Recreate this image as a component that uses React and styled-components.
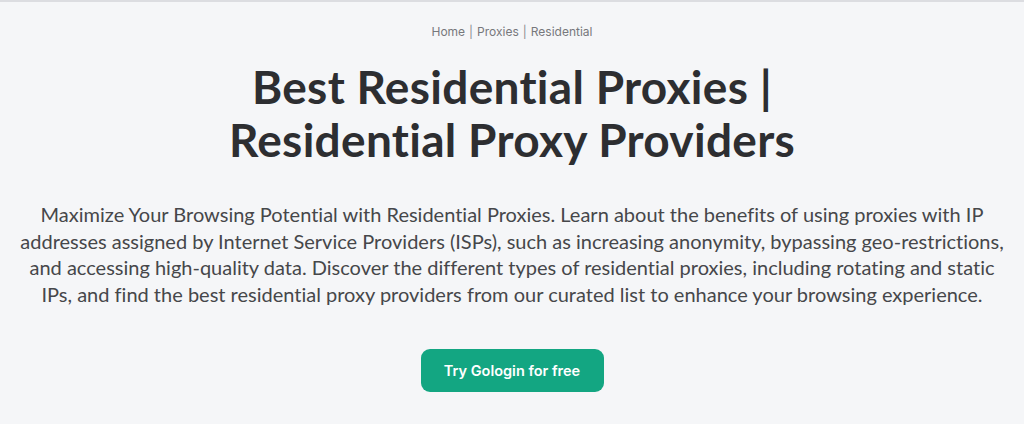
import React from "react";
import styled, { createGlobalStyle } from "styled-components";

const GlobalStyle = createGlobalStyle`
  * { box-sizing: border-box; }
  html, body {
    margin: 0;
    padding: 0;
    background: #f5f6f8;
  }
  body {
    font-family: "Lato", "Inter", sans-serif;
    font-variant-ligatures: none;
  }
`;

const Page = styled.div`
  height: 424px;
  border-top: 2px solid #dcdde1;
  display: flex;
  flex-direction: column;
  align-items: center;
  padding: 21px 12px 0;
`;

const Breadcrumbs = styled.nav`
  font-family: "Inter", sans-serif;
  font-size: 12px;
  color: #77787c;
  display: flex;
  gap: 4px;
  line-height: 18px;
`;

const Crumb = styled.a`
  color: inherit;
  text-decoration: none;
`;

const Sep = styled.span`
  color: #8a8b8f;
`;

const Title = styled.h1`
  margin: 19px 0 0;
  font-family: "Lato", sans-serif;
  font-weight: 700;
  font-size: 46px;
  line-height: 53px;
  color: #2d2e31;
  text-align: center;
  letter-spacing: 0.3px;
  max-width: 640px;
`;

const Lead = styled.p`
  margin: 35px 0 0;
  font-family: "Lato", sans-serif;
  font-size: 20px;
  line-height: 26.5px;
  color: #46474a;
  text-align: center;
  max-width: 1000px;
`;

const Button = styled.a`
  margin-top: 42px;
  width: 183px;
  height: 43px;
  border-radius: 9px;
  background: #13a682;
  color: #fff;
  font-family: "Inter", sans-serif;
  font-weight: 600;
  font-size: 14.5px;
  display: flex;
  align-items: center;
  justify-content: center;
  text-decoration: none;
`;

export default function App() {
  return (
    <>
      <GlobalStyle />
      <Page>
        <Breadcrumbs>
          <Crumb href="#">Home</Crumb>
          <Sep>|</Sep>
          <Crumb href="#">Proxies</Crumb>
          <Sep>|</Sep>
          <Crumb href="#">Residential</Crumb>
        </Breadcrumbs>
        <Title>Best Residential Proxies | Residential Proxy Providers</Title>
        <Lead>
          Maximize Your Browsing Potential with Residential Proxies. Learn about
          the benefits of using proxies with IP addresses assigned by Internet
          Service Providers (ISPs), such as increasing anonymity, bypassing
          geo-restrictions, and accessing high-quality data. Discover the
          different types of residential proxies, including rotating and static
          IPs, and find the best residential proxy providers from our curated
          list to enhance your browsing experience.
        </Lead>
        <Button href="#">Try Gologin for free</Button>
      </Page>
    </>
  );
}
